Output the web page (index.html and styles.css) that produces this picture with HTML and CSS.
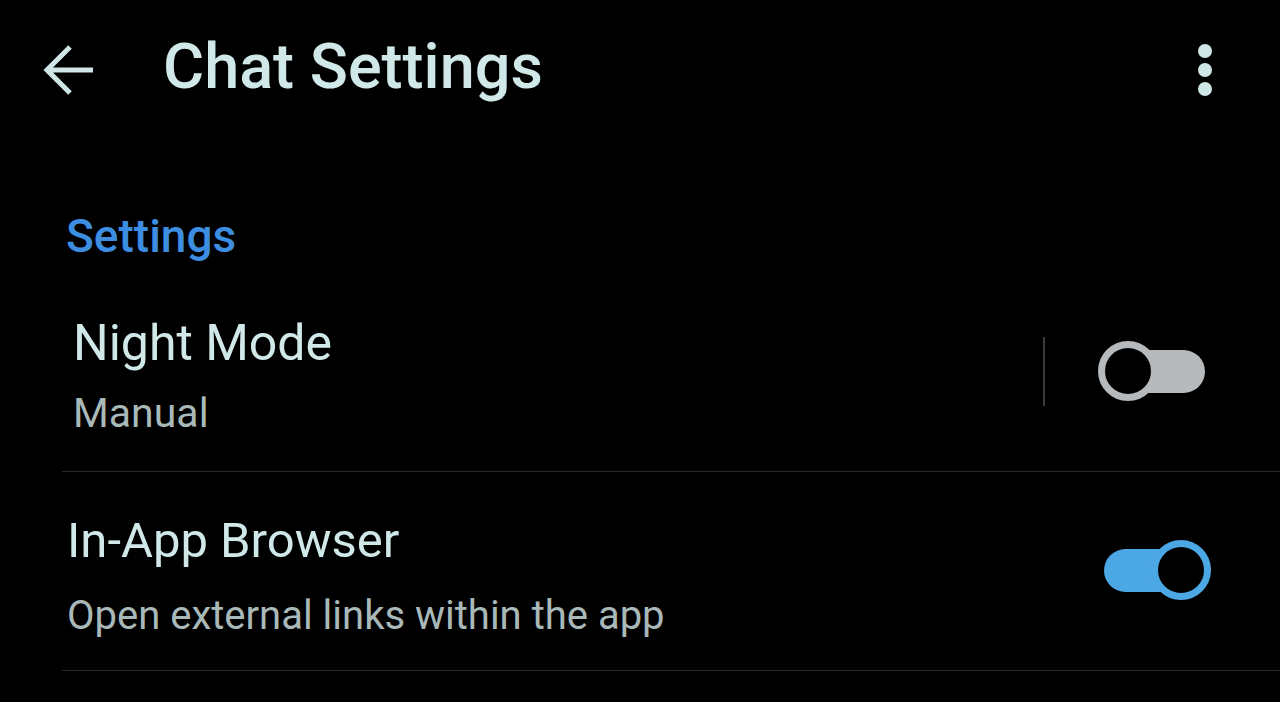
FILE: index.html
```html
<!DOCTYPE html>
<html lang="en">
<head>
    <meta charset="UTF-8">
    <meta name="viewport" content="width=device-width, initial-scale=1.0">
    <title>Chat Settings</title>
    <link rel="stylesheet" href="styles.css">
</head>
<body>
    <div class="app">
        <!-- Barre du haut -->
        <header class="toolbar">
            <button class="icon-button back" aria-label="Back">
                <svg width="52" height="52" viewBox="0 0 52 52">
                    <path d="M51 26 H5 M28 3 L5 26 L28 49" fill="none" stroke="#cfe6e6" stroke-width="5"/>
                </svg>
            </button>
            <h1 class="toolbar-title">Chat Settings</h1>
            <button class="icon-button more" aria-label="More options">
                <svg width="20" height="60" viewBox="0 0 20 60">
                    <circle cx="10" cy="11" r="7" fill="#cfe6e6"/>
                    <circle cx="10" cy="30" r="7" fill="#cfe6e6"/>
                    <circle cx="10" cy="49" r="7" fill="#cfe6e6"/>
                </svg>
            </button>
        </header>

        <h2 class="section-title">Settings</h2>

        <div class="setting-row night">
            <div class="setting-text">
                <div class="setting-name">Night Mode</div>
                <div class="setting-desc">Manual</div>
            </div>
            <div class="setting-control">
                <span class="separator"></span>
                <span class="switch"><span class="track"></span><span class="thumb"></span></span>
            </div>
        </div>

        <div class="setting-row browser">
            <div class="setting-text">
                <div class="setting-name">In-App Browser</div>
                <div class="setting-desc">Open external links within the app</div>
            </div>
            <div class="setting-control">
                <span class="switch on"><span class="track"></span><span class="thumb"></span></span>
            </div>
        </div>
    </div>
</body>
</html>
```

FILE: styles.css
```css
body {
    margin: 0;
    padding: 0;
    background-color: #000000;
    font-family: Roboto, "Noto Sans", sans-serif;
    color: #d0e8e8;
}

.app {
    width: 1280px;
    height: 702px;
    overflow: hidden;
}

/* Barre du haut */
.toolbar {
    display: flex;
    align-items: center;
    height: 138px;
}

.icon-button {
    background: none;
    border: none;
    padding: 0;
    display: flex;
    cursor: pointer;
}

.back {
    margin-left: 42px;
    margin-top: 2px;
}

.toolbar-title {
    margin: -4px 0 0 69px;
    font-size: 63px;
    font-weight: 500;
    line-height: 76px;
    color: #d0e8e8;
}

.more {
    margin-left: auto;
    margin-right: 65px;
    margin-top: 2px;
}

.section-title {
    margin: 72px 0 0 66px;
    font-size: 46px;
    font-weight: 500;
    line-height: 52px;
    color: #3d8de0;
}

/* Lignes de réglages */
.setting-row {
    display: flex;
    align-items: center;
    justify-content: space-between;
    margin-left: 62px;
    border-bottom: 1px solid #2a2a2a;
}

.setting-row.night {
    padding: 53px 75px 34px 11px;
}

.setting-row.browser {
    padding: 41px 69px 30px 5px;
}

.setting-name {
    font-size: 50px;
    line-height: 56px;
}

.setting-desc {
    font-size: 41px;
    line-height: 48px;
    color: #a9b8b8;
}

.night .setting-desc {
    margin-top: 18px;
}

.browser .setting-name {
    font-size: 49px;
}

.browser .setting-desc {
    margin-top: 23px;
    font-size: 40px;
}

.setting-control {
    display: flex;
    align-items: center;
}

.night .setting-control {
    margin-bottom: 10px;
}

.browser .setting-control {
    margin-bottom: 14px;
}

.separator {
    width: 2px;
    height: 69px;
    background-color: #3a3a3a;
    margin-right: 53px;
}

/* Interrupteur */
.switch {
    position: relative;
    display: block;
    width: 107px;
    height: 60px;
}

.track {
    position: absolute;
    top: 9px;
    left: 20px;
    right: 0;
    height: 43px;
    border-radius: 22px;
    background-color: #b7babd;
}

.thumb {
    position: absolute;
    top: 0;
    left: 0;
    width: 46px;
    height: 46px;
    border: 7px solid #b7babd;
    border-radius: 50%;
    background-color: #000000;
}

.switch.on .track {
    left: 0;
    right: 20px;
    background-color: #4ca7e5;
}

.switch.on .thumb {
    left: auto;
    right: 0;
    border-color: #4ca7e5;
}
```
